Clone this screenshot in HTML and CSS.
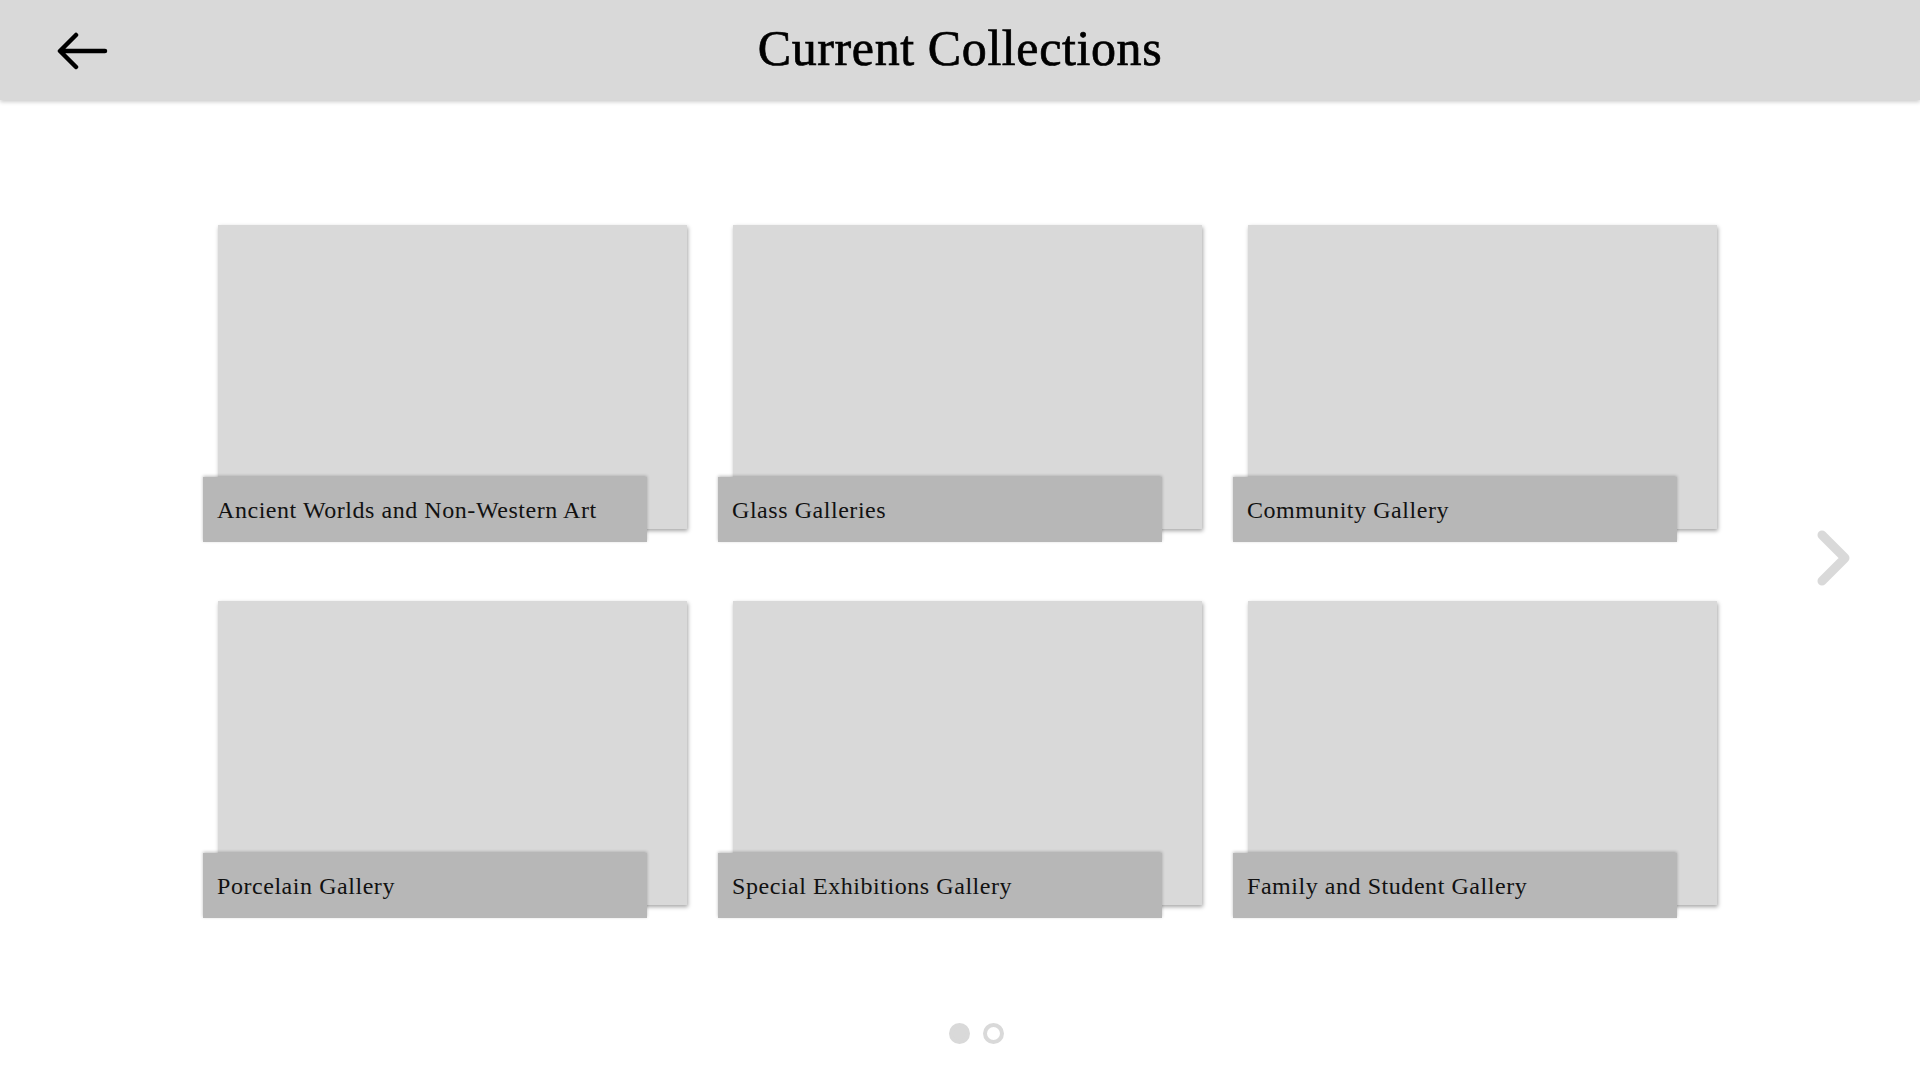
FILE: index.html
```html
<!DOCTYPE html>
<html lang="en">
<head>
<meta charset="UTF-8">
<meta name="viewport" content="width=device-width, initial-scale=1.0">
<title>Current Collections</title>
<link rel="stylesheet" href="styles.css">
</head>
<body>
<header class="topbar">
  <a class="back" href="#" aria-label="Back">
    <svg width="52" height="40" viewBox="0 0 52 40">
      <path d="M48 19 H4 M19 3 L3 19 L19 35" fill="none" stroke="#000" stroke-width="4.5" stroke-linecap="round" stroke-linejoin="round"/>
    </svg>
  </a>
  <h1 class="title">Current Collections</h1>
</header>

<main class="content">
  <div class="grid">
    <div class="card"><div class="label">Ancient Worlds and Non-Western Art</div></div>
    <div class="card"><div class="label">Glass Galleries</div></div>
    <div class="card"><div class="label">Community Gallery</div></div>
    <div class="card"><div class="label">Porcelain Gallery</div></div>
    <div class="card"><div class="label">Special Exhibitions Gallery</div></div>
    <div class="card"><div class="label">Family and Student Gallery</div></div>
  </div>
  <a class="next" href="#" aria-label="Next">
    <svg width="40" height="60" viewBox="0 0 40 60">
      <path d="M8 5 L31 28 L8 51" fill="none" stroke="#d9d9d9" stroke-width="9" stroke-linecap="round" stroke-linejoin="round"/>
    </svg>
  </a>
</main>

<div class="dots">
  <span class="dot active"></span>
  <span class="dot"></span>
</div>
</body>
</html>
```

FILE: styles.css
```css
body {
  margin: 0;
  background-color: #fff;
  font-family: "Liberation Serif", "Times New Roman", serif;
  color: #111;
}

.topbar {
  height: 100px;
  background-color: #d9d9d9;
  box-shadow: 0 2px 4px rgba(0, 0, 0, 0.2);
  display: flex;
  align-items: center;
  justify-content: center;
  position: relative;
}

.back {
  position: absolute;
  left: 57px;
  top: 32px;
  display: block;
  line-height: 0;
}

.title {
  margin: 0 0 4px;
  font-size: 50px;
  font-weight: normal;
  letter-spacing: 0.6px;
  color: #000;
  -webkit-text-stroke: 0.7px #000;
}

.content {
  display: flex;
  align-items: center;
  padding: 125px 0 0 218px;
}

.grid {
  display: grid;
  grid-template-columns: repeat(3, 469px);
  grid-auto-rows: 304px;
  column-gap: 46px;
  row-gap: 72px;
}

.card {
  background-color: #d9d9d9;
  box-shadow: 1px 2px 4px rgba(0, 0, 0, 0.35);
  display: flex;
  flex-direction: column;
  justify-content: flex-end;
}

.label {
  width: 444px;
  height: 65px;
  box-sizing: border-box;
  margin: 0 0 -13px -15px;
  padding: 15px 0 0 14px;
  background-color: #b7b7b7;
  box-shadow: 0 -1px 3px rgba(0, 0, 0, 0.25);
  font-size: 24px;
  letter-spacing: 0.55px;
  line-height: 36px;
}

.next {
  margin: 0 0 10px 97px;
  line-height: 0;
  display: block;
}

.dots {
  display: flex;
  justify-content: center;
  gap: 13px;
  padding: 118px 0 0 32px;
}

.dot {
  width: 21px;
  height: 21px;
  box-sizing: border-box;
  border-radius: 50%;
  border: 4px solid #d9d9d9;
}

.dot.active {
  background-color: #d9d9d9;
}
```
